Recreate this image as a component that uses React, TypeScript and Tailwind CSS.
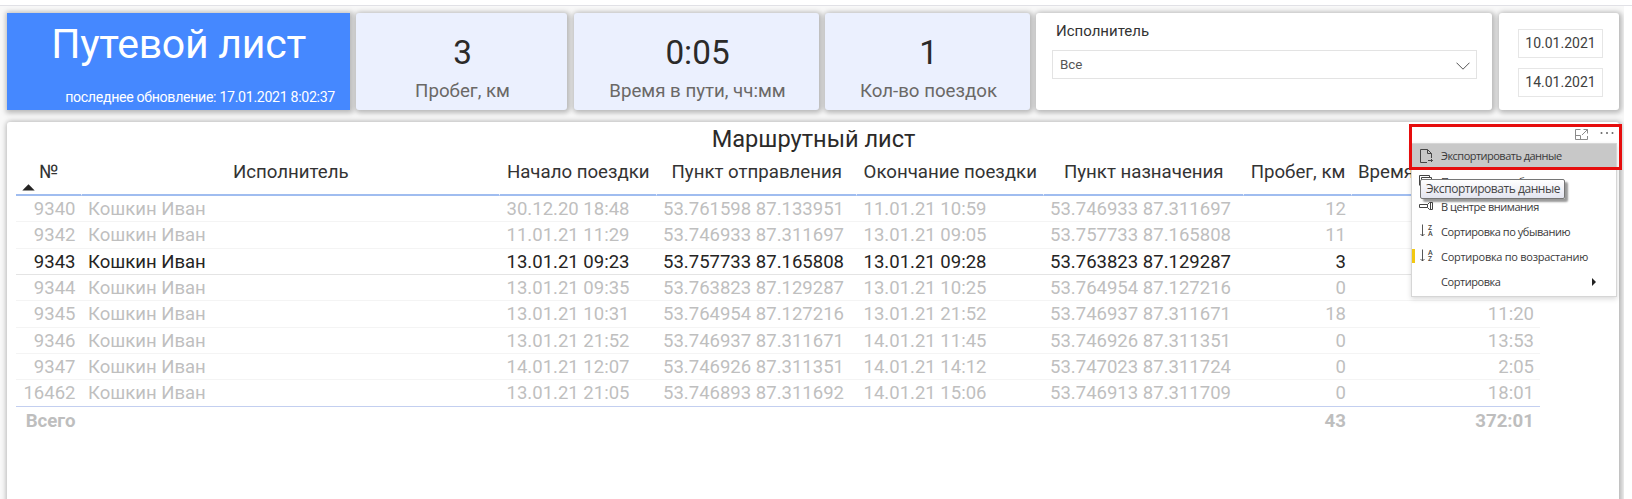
import React from 'react';

type Row = [string, string, string, string, string, string, string, string];

const rows: Row[] = [
  ['9340', 'Кошкин Иван', '30.12.20 18:48', '53.761598 87.133951', '11.01.21 10:59', '53.746933 87.311697', '12', ''],
  ['9342', 'Кошкин Иван', '11.01.21 11:29', '53.746933 87.311697', '13.01.21 09:05', '53.757733 87.165808', '11', ''],
  ['9343', 'Кошкин Иван', '13.01.21 09:23', '53.757733 87.165808', '13.01.21 09:28', '53.763823 87.129287', '3', ''],
  ['9344', 'Кошкин Иван', '13.01.21 09:35', '53.763823 87.129287', '13.01.21 10:25', '53.764954 87.127216', '0', ''],
  ['9345', 'Кошкин Иван', '13.01.21 10:31', '53.764954 87.127216', '13.01.21 21:52', '53.746937 87.311671', '18', '11:20'],
  ['9346', 'Кошкин Иван', '13.01.21 21:52', '53.746937 87.311671', '14.01.21 11:45', '53.746926 87.311351', '0', '13:53'],
  ['9347', 'Кошкин Иван', '14.01.21 12:07', '53.746926 87.311351', '14.01.21 14:12', '53.747023 87.311724', '0', '2:05'],
  ['16462', 'Кошкин Иван', '13.01.21 21:05', '53.746893 87.311692', '14.01.21 15:06', '53.746913 87.311709', '0', '18:01'],
];

const headers = ['№', 'Исполнитель', 'Начало поездки', 'Пункт отправления', 'Окончание поездки', 'Пункт назначения', 'Пробег, км', 'Время'];

const cols = 'grid grid-cols-[65.5px_418.5px_156.5px_200.5px_186.5px_200.5px_108px_188px] w-[1524px]';
const shadow = 'shadow-[1px_1px_5px_2px_rgba(0,0,0,0.26)]';

function Kpi({ value, label, className }: { value: string; label: string; className: string }) {
  return (
    <div className={`flex h-[97px] flex-col items-center rounded-[3px] bg-[#ebf0fe] pl-[2px] ${shadow} ${className}`}>
      <div className="mt-[19px] h-[40px] text-[33.3px] leading-[41px] text-[#2b2a29]">{value}</div>
      <div className="mt-[7px] text-[18.7px] leading-[24px] text-[#6a6866]">{label}</div>
    </div>
  );
}

function DateBox({ children }: { children: string }) {
  return (
    <div className="flex h-[29px] w-[85px] items-center justify-center border border-[#e6e6e6] pl-px text-[14px] text-[#404040]">
      {children}
    </div>
  );
}

function SortIcon({ top, bottom }: { top: string; bottom: string }) {
  return (
    <span className="flex items-center gap-[3px] pb-[3px] pl-px text-[#444]">
      <svg width="5" height="13" viewBox="0 0 5 13" fill="none" stroke="currentColor" strokeWidth="0.9">
        <path d="M2.5 0.5V12M0.5 10L2.5 12L4.5 10" />
      </svg>
      <span className="flex flex-col text-[7px] leading-[6px] font-semibold">
        <span>{top}</span>
        <span>{bottom}</span>
      </span>
    </span>
  );
}

function MenuItem({ icon, label, className = 'pt-px tracking-[-0.45px]', children }: { icon?: React.ReactNode; label: string; className?: string; children?: React.ReactNode }) {
  return (
    <div className={`flex h-[25px] items-center text-[11px] text-[#3a3a3a] ${className}`}>
      <span className="flex w-[29px] shrink-0 items-center pl-[7px]">{icon}</span>
      <span className="whitespace-nowrap">{label}</span>
      {children}
    </div>
  );
}

export default function App() {
  return (
    <div className="relative h-[499px] w-[1632px] overflow-hidden bg-white pt-[5px] font-[Roboto,sans-serif]">
      <div className="h-px bg-[#e1e1e6]" />
      <div className="h-[493px] w-[1624px] overflow-hidden bg-[#f8f8f8] pt-[7px] pl-[7px]">
        <div className="flex h-[97px]">
          <div className={`flex w-[343px] flex-col bg-[#4588ff] text-white ${shadow}`}>
            <div className="mt-[5px] text-center text-[41px] leading-[53px] tracking-[-0.25px]">Путевой лист</div>
            <div className="mt-[17px] pr-[15px] text-right text-[14.2px] leading-[18px] tracking-[-0.33px]">последнее обновление: 17.01.2021 8:02:37</div>
          </div>
          <Kpi value="3" label="Пробег, км" className="ml-[6px] w-[211px]" />
          <Kpi value="0:05" label="Время в пути, чч:мм" className="ml-[7px] w-[245px]" />
          <Kpi value="1" label="Кол-во поездок" className="ml-[6px] w-[205px]" />
          <div className={`ml-[6px] w-[456px] rounded-[3px] bg-white pt-[8px] pl-[16px] ${shadow}`}>
            <div className="pl-[4px] text-[15px] leading-[20px] text-[#333]">Исполнитель</div>
            <div className="mt-[9px] flex h-[29px] w-[425px] items-center justify-between border border-[#e3e3e3] pr-[6px] pl-[7px] text-[13.4px] text-[#555]">
              <span className="pt-px">Все</span>
              <svg width="14" height="8" viewBox="0 0 14 8" fill="none" stroke="#555" strokeWidth="1" className="mt-[3px]">
                <path d="M0.5 0.7L7 7.2L13.5 0.7" />
              </svg>
            </div>
          </div>
          <div className={`ml-[7px] flex w-[120px] flex-col items-center gap-[10px] rounded-[3px] bg-white pt-[16px] pl-[2px] ${shadow}`}>
            <DateBox>10.01.2021</DateBox>
            <DateBox>14.01.2021</DateBox>
          </div>
        </div>

        <div className={`mt-[12px] h-[400px] w-[1612px] rounded-[3px] bg-white pl-[9px] ${shadow}`}>
          <div className="h-[33px] pt-[3px] pr-[8px] text-center text-[23.6px] leading-[28px] text-[#2b2a29]">Маршрутный лист</div>
          <div className={`${cols} h-[41px] text-[18.67px] text-[#333]`}>
            {headers.map((h, i) => (
              <div key={h} className={`relative border-r border-b-2 border-r-transparent border-b-[#a0bdf0] pt-[5px] leading-[24px] whitespace-nowrap ${i === 7 ? 'pl-[6px] text-left' : 'pl-[1px] text-center'}`}>
                {h}
                {i === 0 && (
                  <svg width="13" height="7" viewBox="0 0 13 7" className="absolute bottom-[3px] left-[6px]" fill="#252423">
                    <path d="M0.3 6.5L6.5 0.3L12.7 6.5Z" />
                  </svg>
                )}
              </div>
            ))}
          </div>
          {rows.map((r, i) => (
            <div
              key={r[0]}
              className={`${cols} h-[26.33px] border-b text-[18.55px] leading-[27px] ${i === 7 ? 'border-[#c3cff0]' : i === 2 ? 'border-[#e4e4e4]' : 'border-[#f4f4f4]'} ${i === 2 ? 'text-[#252423]' : 'text-[#bfbfbf]'}`}
            >
              {r.map((c, j) => (
                <div key={j} className={`whitespace-nowrap ${j === 0 || j > 5 ? 'pr-[6px] text-right' : 'pl-[6.5px]'}`}>
                  {c}
                </div>
              ))}
            </div>
          ))}
          <div className={`${cols} h-[27px] text-[18.67px] leading-[28px] font-bold text-[#bebebe]`}>
            <div className="pr-[6px] text-right">Всего</div>
            <div className="col-span-5" />
            <div className="pr-[6px] text-right">43</div>
            <div className="pr-[6px] text-right">372:01</div>
          </div>
        </div>
      </div>

      <div className="absolute top-[143px] left-[1411px] h-[154px] w-[206px] border border-[#d6d6d6] bg-white font-['Open_Sans',sans-serif] shadow-[0_2px_5px_rgba(0,0,0,0.15)]">
        <MenuItem
          label="Экспортировать данные"
          className="bg-[#c8c8c8] tracking-[-0.52px]"
          icon={
            <svg width="14" height="15" viewBox="0 0 14 15" fill="none" stroke="#444" strokeWidth="1" className="mb-[2px]">
              <path d="M8 14.5H1.5V1.5H8.5L12.5 5.5V10M8.5 1.5V5.5H12.5M9 12.5H13.5M12 11L13.5 12.5L12 14" />
            </svg>
          }
        />
        <MenuItem
          label="Показать как таблицу"
          icon={
            <svg width="13" height="13" viewBox="0 0 13 13" fill="none" stroke="#444" strokeWidth="1" className="mb-px">
              <path d="M0.5 10.5V0.5H10.5V2.5M2.5 2.5H12.5V12.5H2.5ZM2.5 5.5H12.5" />
            </svg>
          }
        />
        <MenuItem
          label="В центре внимания"
          icon={
            <svg width="14" height="8" viewBox="0 0 14 8" fill="none" stroke="#444" strokeWidth="1" className="mb-[3px]">
              <path d="M0.5 2.5H8.5V5.5H0.5ZM8.5 2.5L10.5 0.5H13.5V7.5H10.5L8.5 5.5M11.5 0.5V7.5" />
            </svg>
          }
        />
        <MenuItem label="Сортировка по убыванию" icon={<SortIcon top="Z" bottom="A" />} />
        <MenuItem label="Сортировка по возрастанию" className="pt-px tracking-[-0.27px]" icon={<SortIcon top="A" bottom="Z" />} />
        <MenuItem label="Сортировка">
          <svg width="4" height="8" viewBox="0 0 4 8" className="mr-[20px] ml-auto" fill="#222">
            <path d="M0 0L4 4L0 8Z" />
          </svg>
        </MenuItem>
        <div className="absolute top-[105px] left-0 h-[14px] w-[3px] bg-[#f2c811]" />
      </div>

      <div className="absolute top-[124px] left-[1409px] flex h-[46px] w-[213px] justify-end gap-[12px] border-3 border-[#e60d0d] pt-[2px] pr-[5px]">
        <svg width="13" height="11" viewBox="0 0 13 11" fill="none" stroke="#8a8a8a" strokeWidth="1">
          <path d="M5.5 0.5H0.5V10.5H12.5V7M8.5 0.5H12.5V4.5M12.5 0.5L7 6M0.5 6.5H5.5V10.5" />
        </svg>
        <svg width="14" height="8" viewBox="0 0 14 8" fill="#666">
          <circle cx="1.5" cy="4" r="1" />
          <circle cx="7" cy="4" r="1" />
          <circle cx="12.5" cy="4" r="1" />
        </svg>
      </div>

      <div className="absolute top-[179px] left-[1420px] flex h-[20px] w-[145px] items-center rounded-[2px] border border-[#767676] bg-linear-to-b from-white to-[#e4e5f0] pl-[5px] font-['Open_Sans',sans-serif] text-[12px] tracking-[-0.45px] whitespace-nowrap text-[#444] shadow-[3px_3px_2px_rgba(0,0,0,0.4)]">
        Экспортировать данные
      </div>
    </div>
  );
}
